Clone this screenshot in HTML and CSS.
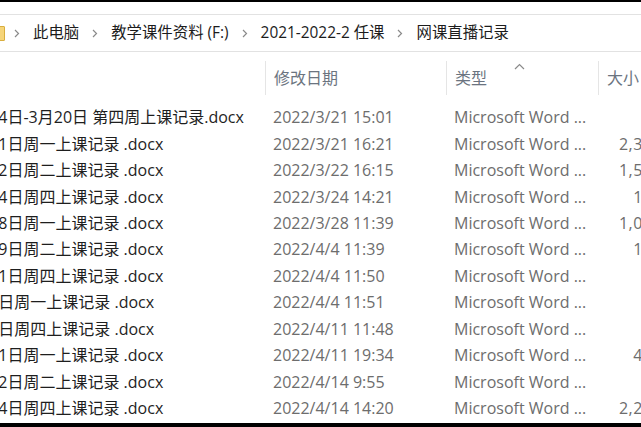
FILE: index.html
```html
<!DOCTYPE html>
<html lang="zh-CN">
<head>
<meta charset="utf-8">
<title>网课直播记录</title>
<link rel="stylesheet" href="styles.css">
</head>
<body>
<div class="window">
  <div class="topbar"></div>
  <div class="address">
    <span class="folder-icon"></span>
    <svg class="chev" width="6" height="9" viewBox="0 0 6 9"><polyline points="1,1 4.5,4.5 1,8" fill="none" stroke="#8a8a8a" stroke-width="1.2"/></svg>
    <span class="crumb">此电脑</span>
    <svg class="chev" width="6" height="9" viewBox="0 0 6 9"><polyline points="1,1 4.5,4.5 1,8" fill="none" stroke="#8a8a8a" stroke-width="1.2"/></svg>
    <span class="crumb">教学课件资料 (F:)</span>
    <svg class="chev" width="6" height="9" viewBox="0 0 6 9"><polyline points="1,1 4.5,4.5 1,8" fill="none" stroke="#8a8a8a" stroke-width="1.2"/></svg>
    <span class="crumb">2021-2022-2 任课</span>
    <svg class="chev" width="6" height="9" viewBox="0 0 6 9"><polyline points="1,1 4.5,4.5 1,8" fill="none" stroke="#8a8a8a" stroke-width="1.2"/></svg>
    <span class="crumb">网课直播记录</span>
  </div>

  <div class="list">
    <div class="row head">
      <div class="c name"></div>
      <div class="c date sep">修改日期</div>
      <div class="c type sep">类型
        <svg class="sort" width="11" height="7" viewBox="0 0 11 7"><polyline points="1,6 5.5,1.5 10,6" fill="none" stroke="#8a8a8a" stroke-width="1.2"/></svg>
      </div>
      <div class="c size sep">大小</div>
    </div>

    <div class="row"><div class="c name"><span class="nm">3月14日-3月20日 第四周上课记录.docx</span></div><div class="c date">2022/3/21 15:01</div><div class="c type">Microsoft Word ...</div><div class="c size">38 KB</div></div>
    <div class="row"><div class="c name"><span class="nm">3月21日周一上课记录 .docx</span></div><div class="c date">2022/3/21 16:21</div><div class="c type">Microsoft Word ...</div><div class="c size">2,356 KB</div></div>
    <div class="row"><div class="c name"><span class="nm">3月22日周二上课记录 .docx</span></div><div class="c date">2022/3/22 16:15</div><div class="c type">Microsoft Word ...</div><div class="c size">1,512 KB</div></div>
    <div class="row"><div class="c name"><span class="nm">3月24日周四上课记录 .docx</span></div><div class="c date">2022/3/24 14:21</div><div class="c type">Microsoft Word ...</div><div class="c size">176 KB</div></div>
    <div class="row"><div class="c name"><span class="nm">3月28日周一上课记录 .docx</span></div><div class="c date">2022/3/28 11:39</div><div class="c type">Microsoft Word ...</div><div class="c size">1,047 KB</div></div>
    <div class="row"><div class="c name"><span class="nm">3月29日周二上课记录 .docx</span></div><div class="c date">2022/4/4 11:39</div><div class="c type">Microsoft Word ...</div><div class="c size">158 KB</div></div>
    <div class="row"><div class="c name"><span class="nm">3月31日周四上课记录 .docx</span></div><div class="c date">2022/4/4 11:50</div><div class="c type">Microsoft Word ...</div><div class="c size">42 KB</div></div>
    <div class="row"><div class="c name"><span class="nm">4月4日周一上课记录 .docx</span></div><div class="c date">2022/4/4 11:51</div><div class="c type">Microsoft Word ...</div><div class="c size">36 KB</div></div>
    <div class="row"><div class="c name"><span class="nm">4月7日周四上课记录 .docx</span></div><div class="c date">2022/4/11 11:48</div><div class="c type">Microsoft Word ...</div><div class="c size">29 KB</div></div>
    <div class="row"><div class="c name"><span class="nm">4月11日周一上课记录 .docx</span></div><div class="c date">2022/4/11 19:34</div><div class="c type">Microsoft Word ...</div><div class="c size">412 KB</div></div>
    <div class="row"><div class="c name"><span class="nm">4月12日周二上课记录 .docx</span></div><div class="c date">2022/4/14 9:55</div><div class="c type">Microsoft Word ...</div><div class="c size">33 KB</div></div>
    <div class="row"><div class="c name"><span class="nm">4月14日周四上课记录 .docx</span></div><div class="c date">2022/4/14 14:20</div><div class="c type">Microsoft Word ...</div><div class="c size">2,218 KB</div></div>
  </div>
  <div class="bottombar"></div>
</div>
</body>
</html>
```

FILE: styles.css
```css
* { box-sizing: border-box; }
html, body { margin: 0; padding: 0; background: #fff; }
body {
  width: 641px;
  height: 427px;
  overflow: hidden;
  font-family: "Open Sans", "Noto Sans CJK SC", sans-serif;
  font-size: 16px;
}
.window {
  display: flex;
  flex-direction: column;
  height: 427px;
  width: 641px;
  overflow: hidden;
}
.topbar {
  height: 2px;
  background: #000;
  flex: none;
  margin-bottom: 12px;
}
.address {
  flex: none;
  height: 38px;
  border-top: 1px solid #e2e2e2;
  border-bottom: 1px solid #e2e2e2;
  display: flex;
  align-items: center;
  color: #1c1c1c;
  white-space: nowrap;
  font-size: 15.4px;
}
.folder-icon {
  width: 17px;
  height: 15px;
  margin-left: -12px;
  background: #f6d57a;
  border: 1px solid #d9ae3e;
  border-radius: 1px;
  flex: none;
}
.chev { flex: none; margin: 0 13px 0 9px; }
.crumb { margin-right: 4px; line-height: 20px; }

.list { flex: 1; margin-top: 9px; }
.row {
  display: grid;
  grid-template-columns: 265px 181px 152px 90px;
  height: 26.45px;
  align-items: center;
  white-space: nowrap;
}
.row.head { height: 34px; margin-bottom: 9px; align-items: stretch; }
.c { overflow: hidden; line-height: 22px; }
.head .c { display: flex; align-items: center; color: #6b7480; position: relative; }
.sep { border-left: 1px solid #e5e5e5; padding-left: 7px; }
.date, .type { padding-left: 8px; color: #6d6d6d; }
.head .date, .head .type, .head .size { padding-left: 8px; }
.name { color: #1e1e1e; }
.nm { display: block; margin-left: -36px; }
.sort { position: absolute; left: 67px; top: 2px; }
.size { color: #6d6d6d; text-align: right; overflow: visible; letter-spacing: 0.5px; }
.head .size { justify-content: flex-start; letter-spacing: 0; }
.bottombar { height: 4px; background: #000; flex: none; }
```
